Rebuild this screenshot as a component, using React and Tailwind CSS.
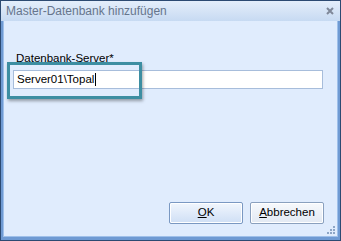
export default function App() {
  return (
    <div className="w-[341px] h-[241px] bg-[#2c4a72] p-px font-['Liberation_Sans',sans-serif]">
      <div className="flex h-full flex-col bg-[#6f9ad3]">
        {/* Title bar */}
        <div className="flex h-[20px] items-center justify-between bg-gradient-to-b from-[#e4eefb] to-[#c7daf2] pl-[5px] pr-[6px]">
          <span className="text-[12px] leading-none text-[#66758c]">Master-Datenbank hinzufügen</span>
          <svg width="8" height="8" viewBox="0 0 8 8">
            <path d="M1 1 L7 7 M7 1 L1 7" stroke="#7f8899" strokeWidth="2" />
          </svg>
        </div>

        {/* Body */}
        <div className="mx-[2px] mb-[3px] flex flex-1 flex-col border border-t-0 border-[#9fc0ea] bg-[#e0ecfd]">
          <div className="relative pl-[9px] pr-[14px] pt-[30px]">
            <div className="pl-[3px] text-[11.5px] leading-[14px] text-black">Datenbank-Server*</div>
            <div className="mt-[5px] flex h-[19px] items-center border border-[#a7bddb] bg-white pl-[3px] text-[11.5px] leading-none text-black">
              Server01\Topal<span className="ml-px inline-block h-[13px] w-px bg-black" />
            </div>
            {/* highlight */}
            <div className="absolute left-[3px] top-[41px] h-[37px] w-[135px] border-[3px] border-[#3d8ea2] shadow-[1px_2px_3px_rgba(0,0,0,0.35)]" />
          </div>

          <div className="flex-1" />

          <div className="relative flex justify-end gap-[7px] pb-[12px] pr-[13px]">
            <button className="h-[22px] w-[74px] rounded-[2px] border border-[#7a98c2] bg-gradient-to-b from-[#f1f6fd] to-[#cfdff5] text-[11.5px] text-black shadow-[inset_0_0_0_1px_#ffffff]">
              <span className="underline">O</span>K
            </button>
            <button className="h-[22px] w-[74px] rounded-[2px] border border-[#8aa0be] bg-gradient-to-b from-[#f7f9fc] to-[#e2e9f3] text-[11.5px] text-black shadow-[inset_0_0_0_1px_#ffffff]">
              <span className="underline">A</span>bbrechen
            </button>
            <svg className="absolute bottom-[2px] right-[2px]" width="8" height="8" viewBox="0 0 8 8">
              <g fill="#8ea6c6">
                <rect x="6" y="0" width="2" height="2" />
                <rect x="3" y="3" width="2" height="2" />
                <rect x="6" y="3" width="2" height="2" />
                <rect x="0" y="6" width="2" height="2" />
                <rect x="3" y="6" width="2" height="2" />
                <rect x="6" y="6" width="2" height="2" />
              </g>
            </svg>
          </div>
        </div>
      </div>
    </div>
  );
}
